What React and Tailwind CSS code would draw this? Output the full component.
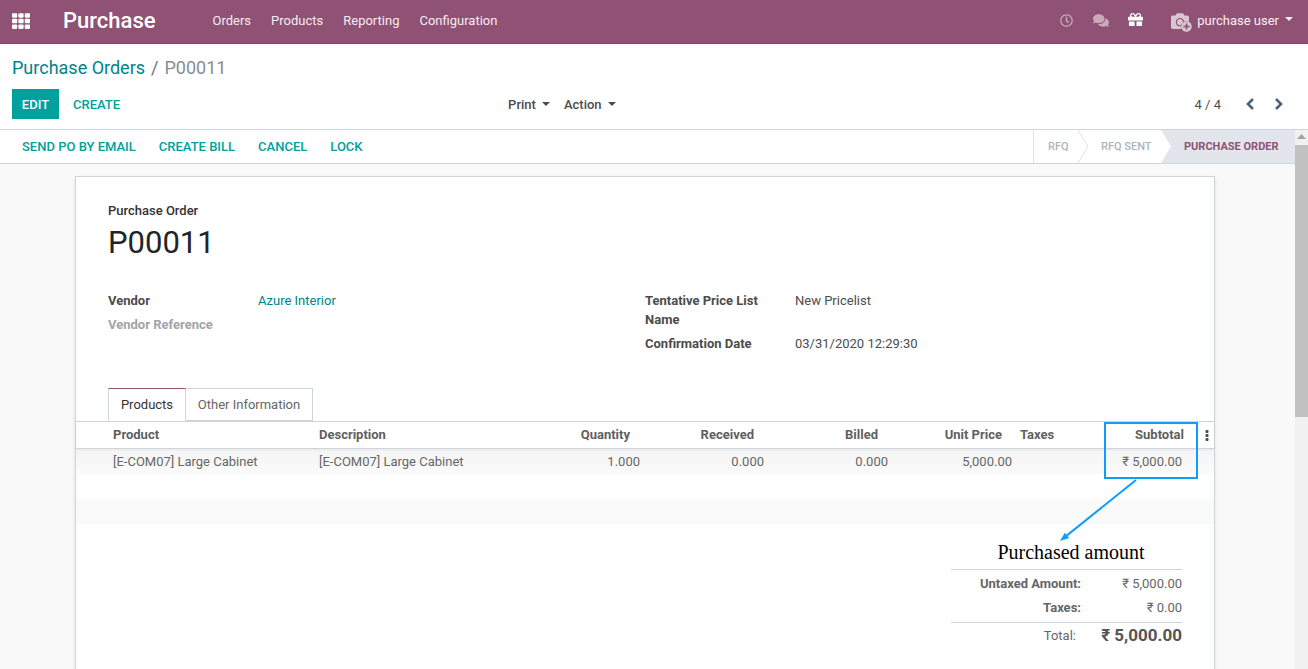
import React from 'react';
import { FaTh, FaRegClock, FaComments, FaGift, FaCamera, FaPlusCircle } from 'react-icons/fa';

const menus = ['Orders', 'Products', 'Reporting', 'Configuration'];
const actions = ['SEND PO BY EMAIL', 'CREATE BILL', 'CANCEL', 'LOCK'];

function Caret() {
  return <span className="inline-block ml-[6px] mb-[3px] w-0 h-0 border-x-[4px] border-x-transparent border-t-[4px] border-t-current" />;
}

function Navbar() {
  return (
    <div className="h-[44px] bg-[#905274] border-b border-b-[#7a4562] flex items-center pb-[2px] text-white shrink-0">
      <FaTh className="ml-[12px] w-[18px] h-[18px] text-white" />
      <span className="ml-[33px] text-[22px] font-medium w-[149.5px]">Purchase</span>
      <div className="flex gap-[20px] text-[13px] text-[#f3ecf0]">
        {menus.map(m => <span key={m}>{m}</span>)}
      </div>
      <div className="ml-auto flex items-center text-[13px]">
        <FaRegClock className="w-[13px] h-[13px] text-[#c9a9ba]" />
        <FaComments className="ml-[20px] w-[16px] h-[15px] text-[#c9a9ba]" />
        <FaGift className="ml-[19px] mb-[2px] w-[15px] h-[15px] text-white" />
        <span className="relative ml-[27px] w-[20px] h-[18px]">
          <FaCamera className="w-[20px] h-[18px] text-[#d8c6d0]" />
          <FaPlusCircle className="absolute right-[-2px] bottom-[-2px] w-[11px] h-[11px] text-[#d8c6d0] bg-[#905274] rounded-full" />
        </span>
        <span className="ml-[7px] text-[#f6f0f3]">purchase user</span>
        <span className="mr-[15px] text-[#f6f0f3] flex"><Caret /></span>
      </div>
    </div>
  );
}

function Chevron({ flip, className }) {
  return (
    <svg className={className} width="9" height="12" viewBox="0 0 9 12" fill="none" stroke="#4d6478" strokeWidth="2.6">
      <path d={flip ? 'M2 1 L7 6 L2 11' : 'M7 1 L2 6 L7 11'} />
    </svg>
  );
}

function ControlPanel() {
  return (
    <div className="h-[86px] bg-white border-b border-b-[#ced4da] shrink-0 px-[12px]">
      <div className="pt-[11px] h-[45px] text-[18px] leading-[25px]">
        <span className="text-[#00838a]">Purchase Orders</span>
        <span className="text-[#6c757d] mx-[6px]">/</span>
        <span className="text-[#868e96]">P00011</span>
      </div>
      <div className="flex items-center h-[30px] text-[13px]">
        <button className="h-[30px] w-[47px] pt-[2px] bg-[#00a09d] text-white font-medium">EDIT</button>
        <button className="ml-[14px] pt-[2px] text-[#00a09d] font-medium">CREATE</button>
        <div className="ml-[388px] pt-[2px] flex gap-[14px] text-[#4c4c4c] font-medium">
          <span>Print<Caret /></span>
          <span>Action<Caret /></span>
        </div>
        <span className="ml-auto mr-[1px] pt-[2px] text-[#4c4c4c]">4 / 4</span>
        <Chevron className="ml-[24px]" />
        <Chevron flip className="ml-[19px] mr-[13px]" />
      </div>
    </div>
  );
}

function StatusBar() {
  return (
    <div className="h-[34px] bg-white border-b border-b-[#ced4da] flex items-center justify-between pl-[10px] shrink-0">
      <div className="flex gap-[23px] text-[13px] font-medium text-[#00a09d]">
        {actions.map(a => <span key={a} className="first:ml-[12px]">{a}</span>)}
      </div>
      <div className="flex h-full text-[11px] font-medium text-[#adb5bd]">
        <div className="relative w-[55px] pt-[2px] border-l border-l-[#dee2e6] flex items-center pl-[14px]">RFQ</div>
        <div className="relative w-[73px] pt-[2px] flex items-center pl-[13px]">
          <svg className="absolute left-[-11px] top-0" width="12" height="33" viewBox="0 0 12 33" fill="none" stroke="#dee2e6"><path d="M1 0 L11 16.5 L1 33" /></svg>
          RFQ SENT
        </div>
        <div className="relative w-[134px] pt-[2px] bg-[#e2e6ec] text-[#905274] font-bold flex items-center pl-[23px] [clip-path:polygon(0_0,100%_0,100%_100%,0_100%,10px_50%)]">
          PURCHASE ORDER
        </div>
      </div>
    </div>
  );
}

function Field({ label, muted, children, className }) {
  return (
    <div className={`flex text-[13px] leading-[19px] ${className || ''}`}>
      <span className={`w-[150px] font-bold ${muted ? 'text-[#a1a5a9]' : 'text-[#4c4c4c]'}`}>{label}</span>
      <span className="text-[#4c4c4c]">{children}</span>
    </div>
  );
}

function Lines() {
  return (
    <div className="text-[13px] text-[#666]">
      <div className="h-[28px] border-y border-y-[#ced4da] flex items-center font-bold text-[#5f5f5f] relative shadow-[0_1px_2px_rgba(0,0,0,0.05)]">
        <span className="ml-[37px] w-[206px]">Product</span>
        <span className="w-[120px]">Description</span>
        <span className="w-[191px] text-right">Quantity</span>
        <span className="w-[124px] text-right">Received</span>
        <span className="w-[124px] text-right">Billed</span>
        <span className="w-[124px] text-right">Unit Price</span>
        <span className="ml-[18px] w-[164px] text-right relative"><span className="absolute left-0">Taxes</span>Subtotal</span>
        <svg className="ml-[21px]" width="4" height="11" viewBox="0 0 4 11" fill="#4c4c4c">
          <rect x="0.5" y="0" width="3" height="3" rx="1" />
          <rect x="0.5" y="4" width="3" height="3" rx="1" />
          <rect x="0.5" y="8" width="3" height="3" rx="1" />
        </svg>
      </div>
      <div className="h-[25px] bg-gradient-to-b from-[#f4f4f4] to-[#fbfbfb] flex items-center">
        <span className="ml-[37px] w-[206px]">[E-COM07] Large Cabinet</span>
        <span className="w-[160px]">[E-COM07] Large Cabinet</span>
        <span className="w-[161px] text-right">1.000</span>
        <span className="w-[124px] text-right">0.000</span>
        <span className="w-[124px] text-right">0.000</span>
        <span className="w-[124px] text-right">5,000.00</span>
        <span className="w-[170px] text-right">₹ 5,000.00</span>
      </div>
      <div className="h-[25px] bg-white" />
      <div className="h-[25px] bg-[#fafafa]" />
    </div>
  );
}

function Totals() {
  return (
    <div className="ml-auto mr-[32px] w-[231px] text-[13px] text-[#666] mt-[14px]">
      <div className="text-[20px] leading-[29px] pb-[2px] text-black text-center pl-[9px] font-['Liberation_Serif',serif]">Purchased amount</div>
      <div className="border-t border-t-[#ced4da] pt-[4px]">
        <div className="flex justify-between h-[24px]"><span className="w-[130px] text-right font-bold">Untaxed Amount:</span><span>₹ 5,000.00</span></div>
        <div className="flex justify-between h-[24px]"><span className="w-[130px] text-right font-bold">Taxes:</span><span>₹ 0.00</span></div>
      </div>
      <div className="border-t border-t-[#ced4da] flex justify-between items-center h-[27px]">
        <span className="w-[125px] text-right">Total:</span>
        <span className="text-[17px] font-bold text-[#555]">₹ 5,000.00</span>
      </div>
    </div>
  );
}

function Sheet() {
  return (
    <div className="relative mx-[75px] mt-[12px] w-[1140px] h-[600px] bg-white border border-[#ced4da] border-b-0 shadow-[0_2px_4px_rgba(0,0,0,0.1)]">
      <div className="px-[32px] pt-[26px]">
        <div className="text-[13px] font-medium text-[#333] leading-[16px]">Purchase Order</div>
        <div className="text-[31px] leading-[38px] text-[#212529] mt-[5px]">P00011</div>
        <div className="flex mt-[29px]">
          <div className="w-[537px]">
            <Field label="Vendor"><span className="text-[#00838a]">Azure Interior</span></Field>
            <Field label="Vendor Reference" muted className="mt-[5px]" />
          </div>
          <div>
            <Field label={<span className="block w-[125px]">Tentative Price List Name</span>}>New Pricelist</Field>
            <Field label="Confirmation Date" className="mt-[5px]">03/31/2020 12:29:30</Field>
          </div>
        </div>
        <div className="flex mt-[35px] h-[33px] text-[13px] relative">
          <span className="w-[78px] justify-center h-[33px] flex items-center bg-white border border-[#ced4da] border-t-[#905274] border-b-white text-[#333] z-10">Products</span>
          <span className="w-[127px] justify-center h-[33px] flex items-center border border-[#ced4da] border-l-0 text-[#666]">Other Information</span>
        </div>
      </div>
      <Lines />
      <Totals />
      <div className="absolute left-[1028px] top-[245px] w-[94px] h-[57px] border-2 border-[#0d9dfc]" />
      <svg className="absolute left-[975px] top-[300px]" width="90" height="70" viewBox="0 0 90 70" fill="none">
        <path d="M85 3 L16 58.4" stroke="#0d9dfc" strokeWidth="2" />
        <path d="M9 64 L13.8 55.7 L18.2 61.1 Z" fill="#0d9dfc" />
      </svg>
    </div>
  );
}

function Scrollbar() {
  return (
    <div className="w-[13px] shrink-0 bg-[#f1f1f1] relative">
      <svg className="absolute left-[2px] top-[4px]" width="9" height="6" viewBox="0 0 9 6"><path d="M4.5 0 L9 5 L0 5 Z" fill="#a3a3a3" /></svg>
      <div className="absolute top-[15px] left-0 w-full h-[272px] bg-[#c1c1c1]" />
    </div>
  );
}

export default function App() {
  return (
    <div className="w-[1308px] h-[669px] overflow-hidden flex flex-col bg-[#f9f9f9] font-['Roboto',sans-serif]">
      <Navbar />
      <ControlPanel />
      <div className="flex flex-1 min-h-0">
        <div className="flex-1 min-w-0 overflow-hidden">
          <StatusBar />
          <Sheet />
        </div>
        <Scrollbar />
      </div>
    </div>
  );
}
